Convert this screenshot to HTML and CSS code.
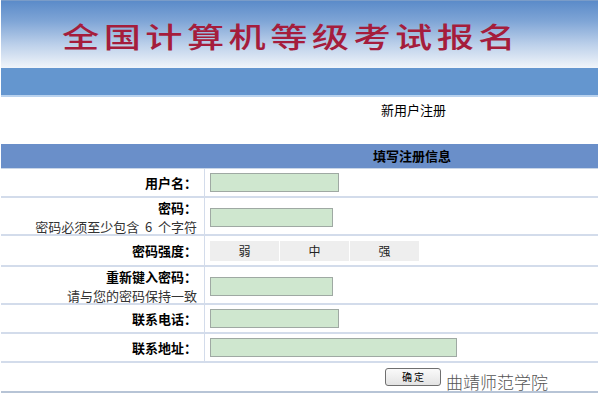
FILE: index.html
```html
<html lang="zh-CN">
  <head>
    <meta charset="UTF-8">
    <title>全国计算机等级考试报名</title>
    <link rel="stylesheet" href="styles.css">
  </head>
  <body>
  <div class="page">
    <div class="banner">
      <h1 class="banner-title">全国计算机等级考试报名</h1>
    </div>
    <div class="banner-bar"></div>

    <div class="subtitle">新用户注册</div>

    <div class="form-head">填写注册信息</div>

    <div class="form">
      <div class="row row-short">
        <div class="label"><b>用户名：</b></div>
        <div class="field"><input class="text w128" type="text"></div>
      </div>
      <div class="row row-tall">
        <div class="label"><b>密码：</b><span class="hint">密码必须至少包含&nbsp; 6&nbsp; 个字符</span></div>
        <div class="field"><input class="text w122" type="password"></div>
      </div>
      <div class="row row-mid">
        <div class="label"><b>密码强度：</b></div>
        <div class="field">
          <div class="strength">
            <span>弱</span><span>中</span><span>强</span>
          </div>
        </div>
      </div>
      <div class="row row-tall">
        <div class="label"><b>重新键入密码：</b><span class="hint">请与您的密码保持一致</span></div>
        <div class="field"><input class="text w122" type="password"></div>
      </div>
      <div class="row row-short">
        <div class="label"><b>联系电话：</b></div>
        <div class="field"><input class="text w128" type="text"></div>
      </div>
      <div class="row row-short">
        <div class="label"><b>联系地址：</b></div>
        <div class="field"><input class="text w246" type="text"></div>
      </div>
      <div class="submit-row">
        <button class="btn">确 定</button>
        <span class="mark">曲靖师范学院</span>
      </div>
    </div>
  </div>
  </body>
</html>
```

FILE: styles.css
```css
body {
  margin: 0;
  font-family: "Noto Sans CJK SC", "DejaVu Sans", sans-serif;
  font-size: 12px;
  color: #000;
  background: #fff;
}

.page {
  width: 597px;
  margin-left: 1px;
}

.banner {
  height: 68px;
  overflow: hidden;
  padding: 19px 0 0 61px;
  background: linear-gradient(to bottom, #5b8bc9 0%, #7fa5d6 30%, #bcd0ea 65%, #f1f5fa 100%);
  border-top: 1px solid #7a9cc8;
  box-sizing: border-box;
}

.banner-title {
  display: inline-block;
  margin: 0;
  font-size: 28px;
  line-height: 32px;
  font-weight: 500;
  letter-spacing: 3.3px;
  color: #a51d3c;
  white-space: nowrap;
  transform: scaleX(1.33);
  transform-origin: left top;
}

.banner-bar {
  height: 27px;
  background: #6496cf;
  border-bottom: 2px solid #b9d2ee;
}

.subtitle {
  height: 47px;
  padding-left: 380px;
  padding-top: 4px;
  box-sizing: border-box;
  font-size: 13px;
  line-height: 18px;
}

.form-head {
  height: 24px;
  background: #6a8fc9;
  padding-left: 372px;
  font-size: 13px;
  font-weight: bold;
  line-height: 24px;
  border-bottom: 1px solid #c9d6e8;
}

.row {
  display: grid;
  grid-template-columns: 204px 1fr;
  border-bottom: 2px solid #d3dceb;
}

.row-short { height: 27px; }
.row-mid { height: 29px; }
.row-tall { height: 36px; }

.label {
  display: flex;
  flex-direction: column;
  justify-content: center;
  align-items: flex-end;
  padding-right: 7px;
  border-right: 1px solid #d3dceb;
  line-height: 19px;
}

.label b {
  font-size: 13px;
}

.hint {
  font-size: 13px;
  color: #333;
}

.field {
  display: flex;
  align-items: center;
  padding-left: 5px;
}

.text {
  height: 19px;
  box-sizing: border-box;
  border: 1px solid #9fa9a3;
  background: #cfe7cf;
  padding: 0;
}

.w128 { width: 129px; }
.w122 { width: 123px; }
.w246 { width: 247px; }

.strength {
  display: flex;
  gap: 1px;
}

.strength span {
  width: 69px;
  height: 20px;
  background: #eeeeee;
  text-align: center;
  line-height: 20px;
  font-size: 12px;
  color: #222;
}

.submit-row {
  height: 28px;
  display: flex;
  align-items: flex-end;
  padding-left: 384px;
  border-bottom: 2px solid #b7c4d6;
}

.btn {
  width: 56px;
  height: 18px;
  margin-bottom: 5px;
  padding: 0;
  font-size: 10px;
  font-family: "Noto Sans CJK SC", sans-serif;
  background: linear-gradient(to bottom, #fafafa, #e3e3e3);
  border: 1px solid #6f6f6f;
  border-radius: 3px;
  line-height: 16px;
}

.mark {
  margin-left: 5px;
  font-size: 17px;
  line-height: 19px;
  color: #555;
  font-weight: 300;
}
```
